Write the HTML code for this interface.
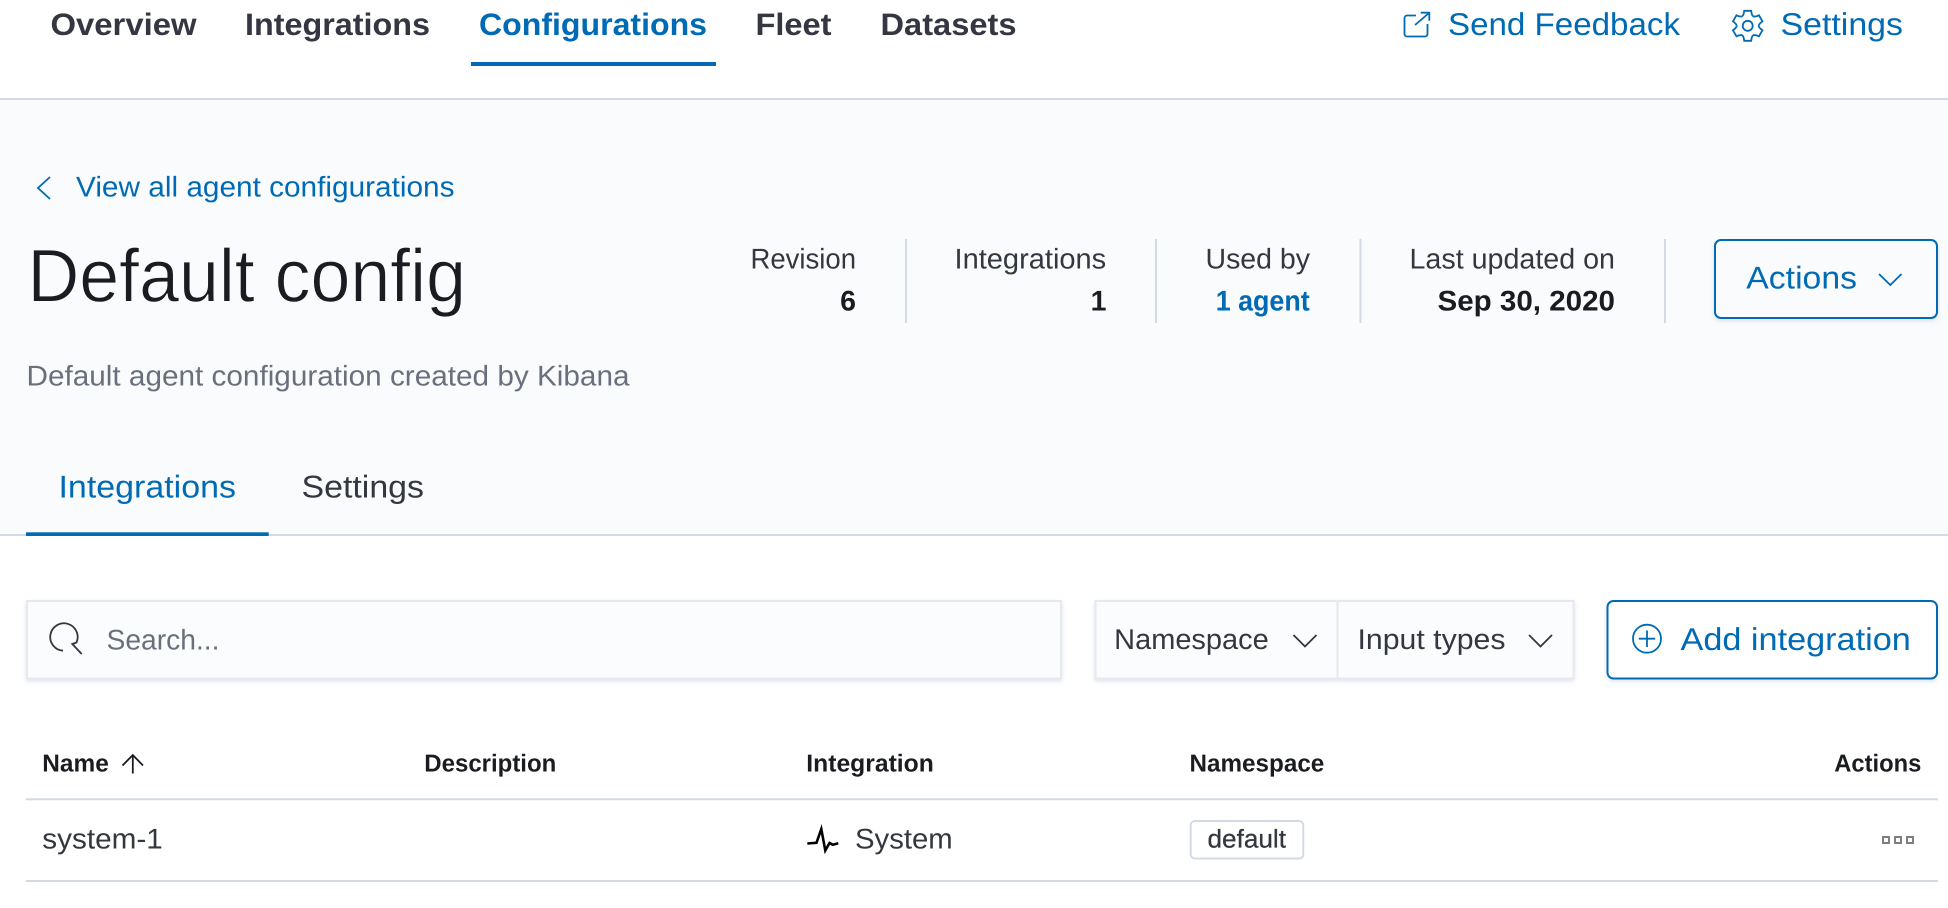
<!DOCTYPE html>
<html lang="en">
<head>
<meta charset="utf-8">
<title>Default config</title>
<style>
html,body{margin:0;padding:0;background:#fff;width:1948px;height:908px;overflow:hidden}
svg{display:block}
text{font-family:"Liberation Sans",sans-serif;text-rendering:geometricPrecision}
.nav{font-size:31px;font-weight:700;fill:#343741}
.b{font-size:28.5px;fill:#343741}
.sb{font-size:28.5px;font-weight:700;fill:#1a1c21}
.th{font-size:24.5px;font-weight:700;fill:#1a1c21}
.big{font-size:31.5px}
text.blue{fill:#006bb4}
.ln{fill:none;stroke:#006bb4;stroke-width:1.8}
.dk{fill:none;stroke:#343741;stroke-width:1.8}
</style>
</head>
<body>
<svg width="1948" height="908" viewBox="0 0 1948 908" xmlns="http://www.w3.org/2000/svg">
<defs>
<filter id="s" x="-5%" y="-10%" width="110%" height="125%"><feDropShadow dx="0" dy="2" stdDeviation="2" flood-color="#98a2b3" flood-opacity=".3"/></filter>
</defs>
<rect width="1948" height="908" fill="#fff"/>
<rect x="0" y="99" width="1948" height="436" fill="#fafbfd"/>
<rect x="0" y="98" width="1948" height="2" fill="#d3dae6"/>
<rect x="0" y="534" width="1948" height="2" fill="#d3dae6"/>

<!-- top nav -->
<text class="nav" x="50.5" y="35" textLength="146" lengthAdjust="spacingAndGlyphs">Overview</text>
<text class="nav" x="245" y="35" textLength="185" lengthAdjust="spacingAndGlyphs">Integrations</text>
<text class="nav blue" x="479" y="35" textLength="228" lengthAdjust="spacingAndGlyphs">Configurations</text>
<text class="nav" x="755.5" y="35" textLength="76" lengthAdjust="spacingAndGlyphs">Fleet</text>
<text class="nav" x="880.5" y="35" textLength="136" lengthAdjust="spacingAndGlyphs">Datasets</text>
<rect x="471" y="62" width="245" height="4" fill="#006bb4"/>

<path class="ln" d="M1416 15.5H1407a2.5 2.5 0 0 0-2.5 2.5V34a2.5 2.5 0 0 0 2.5 2.5H1425a2.5 2.5 0 0 0 2.5-2.5V24M1415 25L1429 13M1420.7 12.7H1429.3V20.7"/>
<text class="b blue big" x="1448" y="35" textLength="232" lengthAdjust="spacingAndGlyphs">Send Feedback</text>
<g class="ln" transform="translate(1747.7 25.8)">
<circle r="5" />
<path d="M-5.5-9.5Q-4-10.5-3.5-15H3.5Q4-10.5 5.5-9.5"/>
<path transform="rotate(60)" d="M-5.5-9.5Q-4-10.5-3.5-15H3.5Q4-10.5 5.5-9.5"/>
<path transform="rotate(120)" d="M-5.5-9.5Q-4-10.5-3.5-15H3.5Q4-10.5 5.5-9.5"/>
<path transform="rotate(180)" d="M-5.5-9.5Q-4-10.5-3.5-15H3.5Q4-10.5 5.5-9.5"/>
<path transform="rotate(240)" d="M-5.5-9.5Q-4-10.5-3.5-15H3.5Q4-10.5 5.5-9.5"/>
<path transform="rotate(300)" d="M-5.5-9.5Q-4-10.5-3.5-15H3.5Q4-10.5 5.5-9.5"/>
</g>
<text class="b blue big" x="1780.5" y="35" textLength="122.5" lengthAdjust="spacingAndGlyphs">Settings</text>

<!-- back link -->
<path class="ln" d="M50 177L38 188L50 199" />
<text class="b blue" x="76" y="196.7" textLength="378.5" lengthAdjust="spacingAndGlyphs">View all agent configurations</text>

<!-- title -->
<text x="27.5" y="301.7" font-size="75" fill="#1a1c21" stroke="#fafbfd" stroke-width=".9" textLength="438.5" lengthAdjust="spacingAndGlyphs">Default config</text>
<text class="b" style="fill:#69707d" x="26.5" y="385.7" textLength="603" lengthAdjust="spacingAndGlyphs">Default agent configuration created by Kibana</text>

<!-- stats -->
<text class="b" x="750.5" y="268.3" textLength="105.5" lengthAdjust="spacingAndGlyphs">Revision</text>
<text class="sb" x="856" y="310.5" text-anchor="end">6</text>
<rect x="905" y="239" width="2" height="84" fill="#d3dae6"/>
<text class="b" x="954.5" y="268.3" textLength="151.7" lengthAdjust="spacingAndGlyphs">Integrations</text>
<text class="sb" x="1106.5" y="310.5" text-anchor="end">1</text>
<rect x="1155" y="239" width="2" height="84" fill="#d3dae6"/>
<text class="b" x="1205.5" y="268.3" textLength="104.5" lengthAdjust="spacingAndGlyphs">Used by</text>
<text class="sb blue" x="1215.7" y="310.5" textLength="94" lengthAdjust="spacingAndGlyphs">1 agent</text>
<rect x="1359.5" y="239" width="2" height="84" fill="#d3dae6"/>
<text class="b" x="1409.5" y="268.3" textLength="205.5" lengthAdjust="spacingAndGlyphs">Last updated on</text>
<text class="sb" x="1437.5" y="310.5" textLength="177.5" lengthAdjust="spacingAndGlyphs">Sep 30, 2020</text>
<rect x="1664" y="239" width="2" height="84" fill="#d3dae6"/>

<!-- Actions button -->
<rect x="1715" y="240" width="222" height="78" rx="6" fill="#fafbfd" stroke="#006bb4" stroke-width="2" filter="url(#s)"/>
<text class="b blue big" x="1746.3" y="288.3" textLength="110.7" lengthAdjust="spacingAndGlyphs">Actions</text>
<path class="ln" d="M1879 274L1890.3 285L1901.5 274"/>

<!-- sub tabs -->
<text class="b blue big" x="58.5" y="497.3" textLength="177.5" lengthAdjust="spacingAndGlyphs">Integrations</text>
<text class="b big" x="301.5" y="497.3" textLength="122.5" lengthAdjust="spacingAndGlyphs">Settings</text>
<rect x="26" y="532.3" width="242.7" height="3.7" fill="#006bb4"/>

<!-- search -->
<rect x="27" y="601" width="1034" height="77.5" fill="#fbfcfd" stroke="#e6e9f2" stroke-width="2" filter="url(#s)"/>
<path class="dk" d="M63 650.7A13.7 13.7 0 1 1 76.5 642.5L72.3 644L81.7 654"/>
<text class="b" style="fill:#69707d" x="106.5" y="649.5" textLength="113" lengthAdjust="spacingAndGlyphs">Search...</text>

<!-- filters -->
<rect x="1095.5" y="601" width="478" height="77.5" fill="#fbfcfd" stroke="#e6e9f2" stroke-width="2" filter="url(#s)"/>
<rect x="1336.5" y="601" width="2" height="77.5" fill="#e6e9f2"/>
<text class="b" x="1114.2" y="649" textLength="154.5" lengthAdjust="spacingAndGlyphs">Namespace</text>
<path class="dk" d="M1293.5 635L1305 646.5L1316.5 635"/>
<text class="b" x="1357.5" y="649" textLength="148" lengthAdjust="spacingAndGlyphs">Input types</text>
<path class="dk" d="M1529 635L1540.5 646.5L1552 635"/>

<!-- Add integration -->
<rect x="1607.5" y="601" width="329.5" height="77.5" rx="6" fill="#fff" stroke="#006bb4" stroke-width="2" filter="url(#s)"/>
<circle class="ln" cx="1647" cy="638.7" r="14"/>
<path class="ln" d="M1647 630.5V647M1638.8 638.7H1655.2"/>
<text class="b blue big" x="1680.5" y="650" textLength="230.3" lengthAdjust="spacingAndGlyphs">Add integration</text>

<!-- table -->
<text class="th" x="42.3" y="771.7" textLength="66.5" lengthAdjust="spacingAndGlyphs">Name</text>
<path class="dk" d="M132.8 773.5V755M122.5 765.5L132.8 755L143 765.5" style="stroke:#1a1c21"/>
<text class="th" x="424.3" y="771.7" textLength="132" lengthAdjust="spacingAndGlyphs">Description</text>
<text class="th" x="806.3" y="771.7" textLength="127.5" lengthAdjust="spacingAndGlyphs">Integration</text>
<text class="th" x="1189.5" y="771.7" textLength="134.8" lengthAdjust="spacingAndGlyphs">Namespace</text>
<text class="th" x="1834.3" y="771.7" textLength="87" lengthAdjust="spacingAndGlyphs">Actions</text>
<rect x="26" y="798.3" width="1912" height="2" fill="#d3dae6"/>

<text class="b" x="42.3" y="848.3" textLength="120.5" lengthAdjust="spacingAndGlyphs">system-1</text>
<path d="M807.3 843.5L816.5 842.8L821.3 829L825.3 850.5L829.5 843L832.7 844.7L838.3 843.3" fill="none" stroke="#000" stroke-width="2.6" stroke-linejoin="miter"/>
<text class="b" x="855" y="848.3" textLength="97.7" lengthAdjust="spacingAndGlyphs">System</text>
<rect x="1190.7" y="821" width="112.6" height="37.5" rx="4" fill="#fff" stroke="#d3dae6" stroke-width="2"/>
<text x="1207.5" y="847.7" font-size="25.5" fill="#343741" textLength="78.5" lengthAdjust="spacingAndGlyphs" stroke="#343741" stroke-width=".3">default</text>
<g fill="#fff" stroke="#808080" stroke-width="2">
<rect x="1883" y="837" width="6" height="6"/>
<rect x="1895" y="837" width="6" height="6"/>
<rect x="1907" y="837" width="6" height="6"/>
</g>
<rect x="26" y="880" width="1912" height="2" fill="#d3dae6"/>
</svg>
</body>
</html>
